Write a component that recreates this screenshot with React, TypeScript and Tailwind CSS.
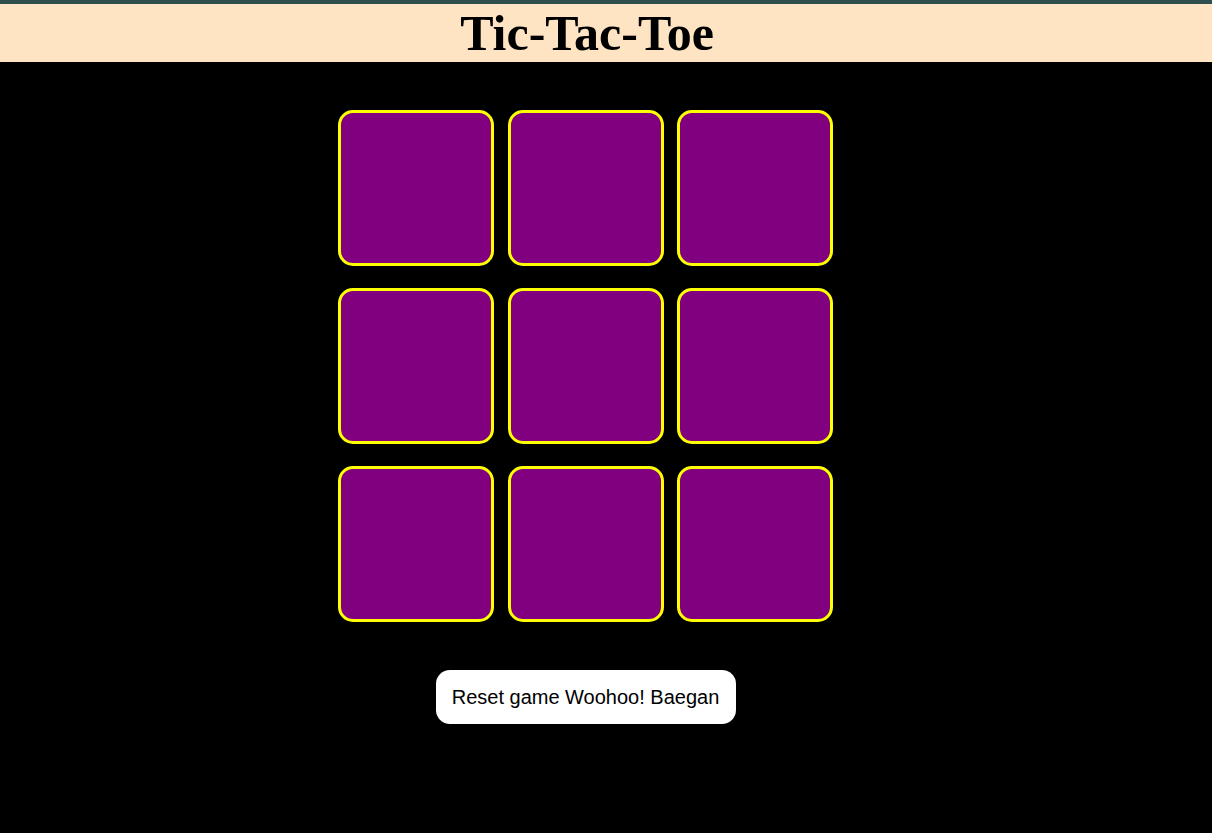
import React from "react";

const cells = Array.from({ length: 9 }, (_, i) => i);

export default function App() {
  return (
    <div className="min-h-[833px] bg-black" style={{ fontFamily: '"Liberation Sans", Arial, sans-serif' }}>
      <div className="h-[4px] bg-[#2f4f4f]" />
      <header className="bg-[#ffe4c4] h-[58px] flex items-center justify-center pr-[38px]">
        <h1 className="text-[50px] font-bold leading-none text-black font-['Liberation_Serif',serif]">
          Tic-Tac-Toe
        </h1>
      </header>

      <main className="flex flex-col items-center pt-[48px] pr-[41px]">
        {/* Board */}
        <div className="grid grid-cols-[156px_156px_156px] gap-x-[13.5px] gap-y-[22px]">
          {cells.map((c) => (
            <button
              key={c}
              className="w-[156px] h-[156px] bg-[#800080] border-[3px] border-[#ffff00] rounded-[15px] cursor-pointer"
            />
          ))}
        </div>

        <button className="mt-[48px] w-[300px] h-[54px] bg-white rounded-[14px] text-[20px] text-black cursor-pointer">
          Reset game Woohoo! Baegan
        </button>
      </main>
    </div>
  );
}
